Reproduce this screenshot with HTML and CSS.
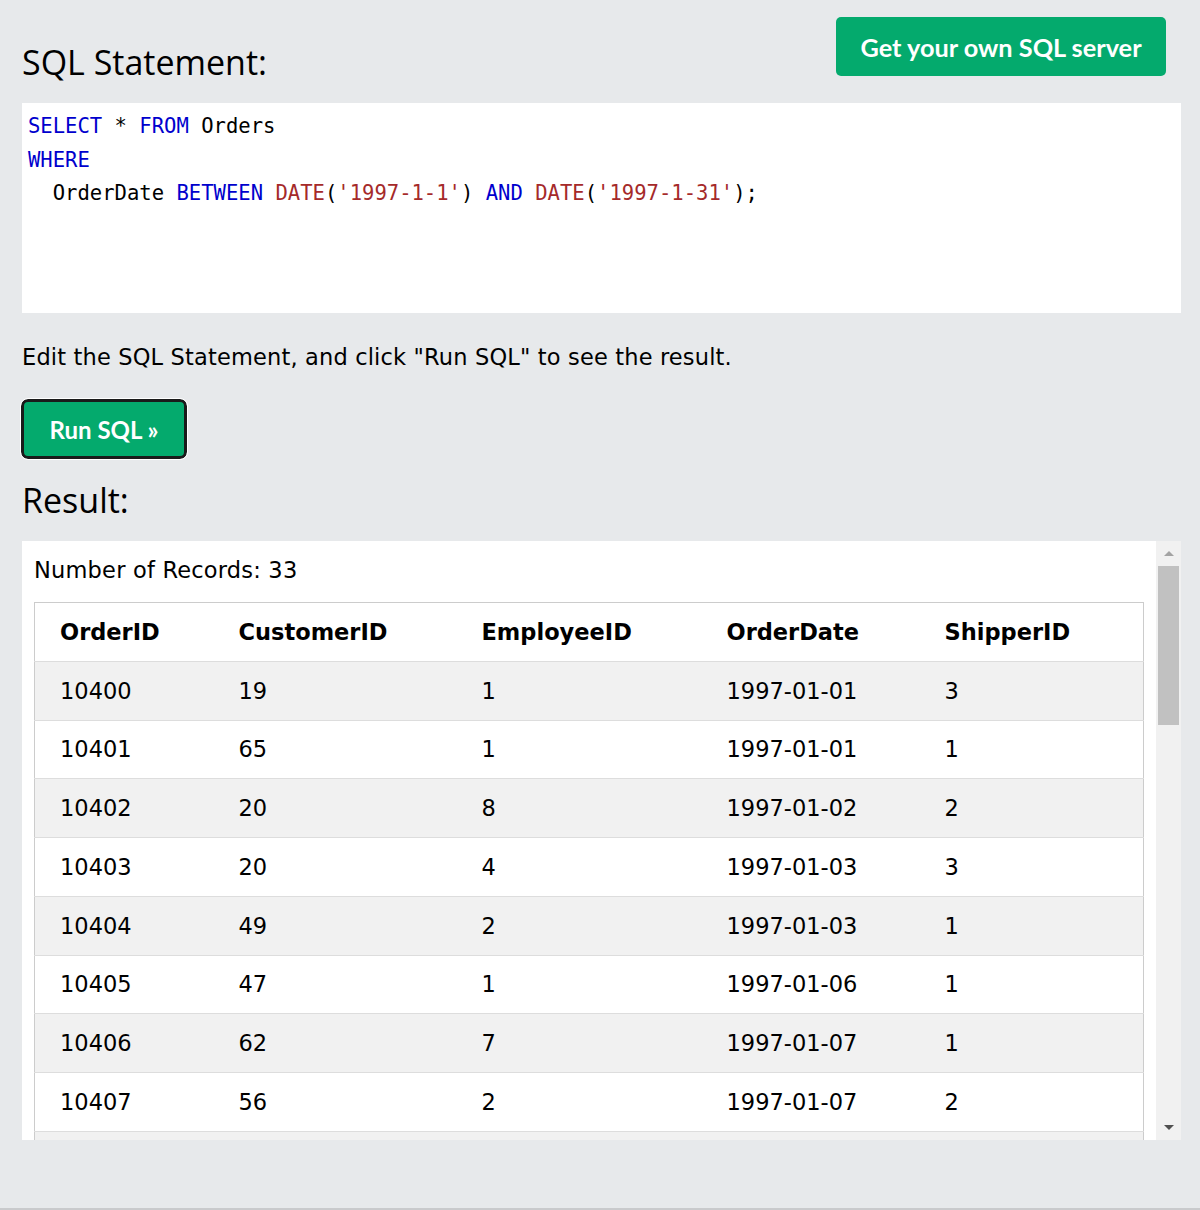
FILE: index.html
```html
<!DOCTYPE html>
<html>
<head>
<meta charset="utf-8">
<link rel="stylesheet" href="styles.css">
</head>
<body>
<div class="page">
  <div class="top-row">
    <h2 class="heading">SQL Statement:</h2>
    <a class="btn-server">Get your own SQL server</a>
  </div>
  <div class="code"><div class="line"><span class="kw">SELECT</span> * <span class="kw">FROM</span> Orders</div><div class="line"><span class="kw">WHERE</span></div><div class="line">&nbsp;&nbsp;OrderDate <span class="kw">BETWEEN</span> <span class="fn">DATE</span>(<span class="str">'1997-1-1'</span>) <span class="kw">AND</span> <span class="fn">DATE</span>(<span class="str">'1997-1-31'</span>);</div></div>
  <p class="hint">Edit the SQL Statement, and click "Run SQL" to see the result.</p>
  <button class="btn-run">Run SQL »</button>
  <h2 class="heading result-heading">Result:</h2>
  <div class="result">
    <div class="result-content">
      <div class="records">Number of Records: 33</div>
      <table class="grid">
        <colgroup>
          <col class="c1"><col class="c2"><col class="c3"><col class="c4"><col class="c5">
        </colgroup>
        <tr><th>OrderID</th><th>CustomerID</th><th>EmployeeID</th><th>OrderDate</th><th>ShipperID</th></tr>
        <tr><td>10400</td><td>19</td><td>1</td><td>1997-01-01</td><td>3</td></tr>
        <tr><td>10401</td><td>65</td><td>1</td><td>1997-01-01</td><td>1</td></tr>
        <tr><td>10402</td><td>20</td><td>8</td><td>1997-01-02</td><td>2</td></tr>
        <tr><td>10403</td><td>20</td><td>4</td><td>1997-01-03</td><td>3</td></tr>
        <tr><td>10404</td><td>49</td><td>2</td><td>1997-01-03</td><td>1</td></tr>
        <tr><td>10405</td><td>47</td><td>1</td><td>1997-01-06</td><td>1</td></tr>
        <tr><td>10406</td><td>62</td><td>7</td><td>1997-01-07</td><td>1</td></tr>
        <tr><td>10407</td><td>56</td><td>2</td><td>1997-01-07</td><td>2</td></tr>
        <tr><td>10408</td><td>23</td><td>8</td><td>1997-01-08</td><td>1</td></tr>
        <tr><td>10409</td><td>54</td><td>3</td><td>1997-01-09</td><td>1</td></tr>
      </table>
    </div>
    <div class="scrollbar">
      <div class="arrow-up"></div>
      <div class="track"><div class="thumb"></div></div>
      <div class="arrow-down"></div>
    </div>
  </div>
</div>
</body>
</html>
```
FILE: styles.css
```css
html, body {
  margin: 0;
  padding: 0;
  background: #e7e9eb;
}
body {
  font-family: "DejaVu Sans", Verdana, sans-serif;
  color: #000;
  height: 1208px;
  border-bottom: 2px solid #c9cacc;
  box-sizing: content-box;
}
.page {
  padding: 17px 19px 0 22px;
}
.top-row {
  display: flex;
  justify-content: space-between;
  align-items: flex-start;
  height: 86px;
}
.heading {
  font-family: "Open Sans", "Segoe UI", sans-serif;
  font-weight: 400;
  font-size: 34px;
  line-height: 46px;
  margin: 0;
}
.top-row .heading {
  margin-top: 22px;
}
.btn-server {
  display: flex;
  align-items: center;
  justify-content: center;
  width: 330px;
  height: 59px;
  margin-right: 15px;
  background: #04aa6d;
  color: #fff;
  border-radius: 5px;
  font-family: Lato, "Source Sans Pro", sans-serif;
  font-weight: 700;
  font-size: 25.3px;
}
.code {
  background: #fff;
  height: 197px;
  padding: 7px 6px 6px 6px;
  font-family: "DejaVu Sans Mono", Consolas, monospace;
  font-size: 20.55px;
  line-height: 33.5px;
  color: #000;
}
.kw { color: #0000cd; }
.fn { color: #a52a2a; }
.str { color: #a52a2a; }
.hint {
  margin: 28px 0 0 0;
  font-size: 22.5px;
  letter-spacing: 0.16px;
  line-height: 32px;
}
.btn-run {
  display: block;
  margin-top: 26px;
  width: 166px;
  height: 60px;
  margin-left: -1px;
  background: #04aa6d;
  color: #fff;
  border: 3px solid #1a1a1a;
  outline: 1px solid #fff;
  border-radius: 7px;
  font-family: Lato, "Source Sans Pro", sans-serif;
  font-weight: 700;
  font-size: 24px;
  padding: 0;
}
.result-heading {
  margin-top: 18px;
}
.result {
  margin-top: 18px;
  height: 599px;
  display: flex;
  background: #fff;
}
.result-content {
  flex: 1;
  overflow: hidden;
  padding: 13px 12px 0 12px;
}
.records {
  font-size: 22.5px;
  letter-spacing: 0.2px;
  line-height: 32px;
}
.grid {
  margin-top: 16px;
  width: 1109px;
  border-collapse: collapse;
  border: 1px solid #ccc;
  font-size: 22.5px;
  table-layout: fixed;
}
.c1 { width: 179px; }
.c2 { width: 243px; }
.c3 { width: 245px; }
.c4 { width: 218px; }
.c5 { width: 224px; }
.grid th, .grid td {
  text-align: left;
  padding: 0 0 0 25px;
  height: 58.75px;
  border-bottom: 1px solid #ddd;
  box-sizing: border-box;
}
.grid th {
  font-weight: 700;
}
.grid tr:nth-child(even) {
  background: #f1f1f1;
}
.scrollbar {
  width: 25px;
  background: #f1f1f1;
  display: flex;
  flex-direction: column;
  align-items: center;
}
.arrow-up, .arrow-down {
  height: 25px;
  width: 25px;
  display: flex;
  align-items: center;
  justify-content: center;
}
.arrow-up::before {
  content: "";
  border-left: 5px solid transparent;
  border-right: 5px solid transparent;
  border-bottom: 5px solid #a3a3a3;
}
.arrow-down::before {
  content: "";
  border-left: 5px solid transparent;
  border-right: 5px solid transparent;
  border-top: 5px solid #505050;
}
.track {
  flex: 1;
  width: 25px;
  display: flex;
  justify-content: center;
}
.thumb {
  width: 21px;
  height: 159px;
  background: #c1c1c1;
}
```
